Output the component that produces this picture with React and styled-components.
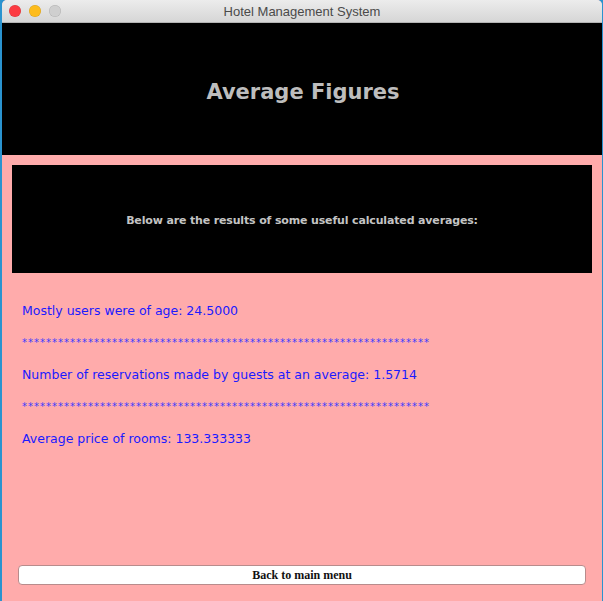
import React from "react";
import styled, { createGlobalStyle } from "styled-components";

const GlobalStyle = createGlobalStyle`
  html, body {
    margin: 0;
    padding: 0;
    background: #2a93cf;
    overflow: hidden;
  }
`;

const Window = styled.div`
  width: 600px;
  height: 601px;
  margin-left: 2px;
  display: flex;
  flex-direction: column;
  background: #ffabab;
  border-top-left-radius: 5px;
  border-top-right-radius: 5px;
  overflow: hidden;
`;

const TitleBar = styled.div`
  position: relative;
  height: 22px;
  flex-shrink: 0;
  display: flex;
  align-items: center;
  justify-content: center;
  background: linear-gradient(#ececec, #d6d6d6);
  border-bottom: 1px solid #b4b4b4;
  font-family: "Liberation Sans", Arial, sans-serif;
  font-size: 13px;
  color: #4a4a4a;
`;

const Lights = styled.div`
  position: absolute;
  left: 7px;
  top: 5px;
  display: flex;
  gap: 8px;
`;

const Light = styled.span`
  width: 12px;
  height: 12px;
  border-radius: 50%;
  background: ${(p) => p.color};
  box-shadow: inset 0 0 0 0.5px rgba(0, 0, 0, 0.15);
`;

const Header = styled.div`
  height: 132px;
  flex-shrink: 0;
  background: #000;
  display: flex;
  align-items: center;
  justify-content: center;
  padding: 6px 0 0 2px;
  box-sizing: border-box;
`;

const Heading = styled.h1`
  margin: 0;
  font-family: "DejaVu Sans", Verdana, sans-serif;
  font-weight: bold;
  font-size: 21px;
  color: #bdbdbd;
`;

const Body = styled.div`
  flex: 1;
  display: flex;
  flex-direction: column;
  padding: 10px 10px 16px 10px;
`;

const Banner = styled.div`
  height: 108px;
  background: #000;
  display: flex;
  align-items: center;
  justify-content: center;
  padding-top: 2px;
  box-sizing: border-box;
  font-family: "DejaVu Sans", Verdana, sans-serif;
  font-weight: bold;
  font-size: 11px;
  letter-spacing: -0.15px;
  color: #c4c4c4;
`;

const Results = styled.div`
  display: flex;
  flex-direction: column;
  gap: 16px;
  padding: 30px 0 0 10px;
  font-family: "DejaVu Sans", "Lucida Grande", sans-serif;
  font-size: 12.5px;
  line-height: 16px;
  color: #1a1aff;
`;

const Line = styled.div`
  white-space: nowrap;
`;

const Stars = styled.div`
  font-size: 10px;
  color: #3c3cff;
  letter-spacing: 1px;
  white-space: nowrap;
`;

const Footer = styled.div`
  margin-top: auto;
  padding: 0 6px;
`;

const BackButton = styled.button`
  width: 100%;
  height: 20px;
  background: #fff;
  border: 1px solid #b88c8c;
  border-radius: 4px;
  font-family: "Liberation Serif", "Times New Roman", serif;
  font-weight: bold;
  font-size: 12px;
  color: #111;
  padding: 0;
`;

const stars = "*".repeat(68);

export default function App() {
  return (
    <>
      <GlobalStyle />
      <Window>
        <TitleBar>
          <Lights>
            <Light color="#fc3b42" />
            <Light color="#fdbc1c" />
            <Light color="#cfcfcf" />
          </Lights>
          Hotel Management System
        </TitleBar>
        <Header>
          <Heading>Average Figures</Heading>
        </Header>
        <Body>
          <Banner>Below are the results of some useful calculated averages:</Banner>
          <Results>
            <Line>Mostly users were of age: 24.5000</Line>
            <Stars>{stars}</Stars>
            <Line>Number of reservations made by guests at an average: 1.5714</Line>
            <Stars>{stars}</Stars>
            <Line>Average price of rooms: 133.333333</Line>
          </Results>
          <Footer>
            <BackButton>Back to main menu</BackButton>
          </Footer>
        </Body>
      </Window>
    </>
  );
}
